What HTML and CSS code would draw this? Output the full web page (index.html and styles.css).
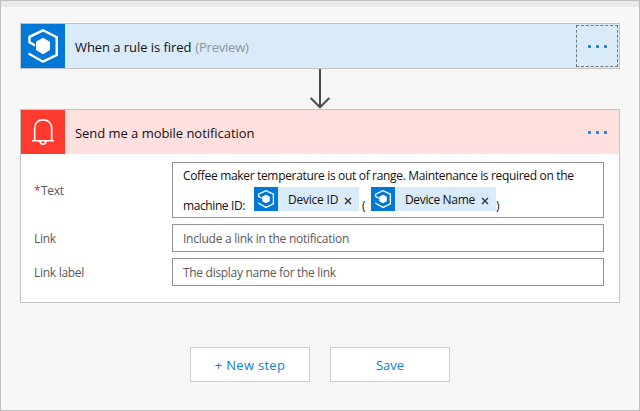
FILE: index.html
```html
<!DOCTYPE html>
<html lang="en">
<head>
<meta charset="utf-8">
<title>Flow designer</title>
<link rel="stylesheet" href="styles.css">
</head>
<body>
<svg width="0" height="0" class="defs">
  <symbol id="hub" viewBox="0 0 44 44">
    <path d="M14 21.500L8.500 18.300V12.800L22 6.300L35.700 13.300V31L22 37.700L7.500 29.500" fill="none" stroke="#fff" stroke-width="2.400"/>
    <path d="M22 13.800L29 17.800V26L22 30.200L15 26V17.800Z" fill="#fff"/>
  </symbol>
  <symbol id="hub-small" viewBox="0 0 24 24">
    <path d="M7.700 11.300L4.600 9.300V7.200L12 3.600L19.400 7.200V16.800L12 20.400L4.200 16" fill="none" stroke="#fff" stroke-width="1.300"/>
    <path d="M12 7.700L15.800 9.800V14.200L12 16.300L8.200 14.200V9.800Z" fill="#fff"/>
  </symbol>
</svg>
<main class="designer">
  <div class="strip"></div>
  <section class="card trigger">
    <header class="head">
      <div class="tile"><svg width="44" height="44"><use href="#hub"/></svg></div>
      <h2 class="title"><span class="t-when">When a rule is fired</span><span class="t-preview">(Preview)</span></h2>
      <button class="more focused" aria-label="More"><i></i><i></i><i></i></button>
    </header>
  </section>
  <svg class="arrow" width="22" height="40" viewBox="0 0 22 40"><path d="M11 0V38M1.700 29L11 38.300L20.300 29" fill="none" stroke="#4a4c4d" stroke-width="2"/></svg>
  <section class="card action">
    <header class="head">
      <div class="tile"><svg width="44" height="44" viewBox="0 0 44 44" fill="none" stroke="#fff" stroke-width="1.600"><path d="M11 30.700H33M13.700 30.500V18.500C13.700 13 17 9.900 22 9.900S30.700 13 30.700 18.500V30.500M19 31C19.300 35.300 24.700 35.300 25 31"/></svg></div>
      <h2 class="title"><span class="t-send">Send me a mobile notification</span></h2>
      <button class="more" aria-label="More"><i></i><i></i><i></i></button>
    </header>
    <div class="form">
      <div class="row tall">
        <label class="label"><b>*</b><span class="t-text">Text</span></label>
        <div class="field multi">
          <div class="line"><span class="t-coffee">Coffee maker temperature is out of range. Maintenance is required on the</span></div>
          <div class="line second">
            <span class="t-machine">machine ID:</span>
            <span class="token id"><svg width="24" height="24"><use href="#hub-small"/></svg><span class="t-id">Device ID</span><svg class="x" width="8" height="8" viewBox="0 0 8 8"><path d="M1 1L7 7M7 1L1 7"/></svg></span>
            <span class="paren open">(</span>
            <span class="token name"><svg width="24" height="24"><use href="#hub-small"/></svg><span class="t-name">Device Name</span><svg class="x" width="8" height="8" viewBox="0 0 8 8"><path d="M1 1L7 7M7 1L1 7"/></svg></span>
            <span class="paren">)</span>
          </div>
        </div>
      </div>
      <div class="row">
        <label class="label"><span class="t-link">Link</span></label>
        <div class="field"><span class="t-include">Include a link in the notification</span></div>
      </div>
      <div class="row">
        <label class="label"><span class="t-label">Link label</span></label>
        <div class="field"><span class="t-display">The display name for the link</span></div>
      </div>
    </div>
  </section>
  <div class="actions">
    <button class="btn"><span class="t-new">+ New step</span></button>
    <button class="btn"><span class="t-save">Save</span></button>
  </div>
</main>
</body>
</html>
```
FILE: styles.css
```css
* { box-sizing: border-box; }
body { margin: 0; font-family: "Open Sans", "Noto Sans", sans-serif; font-size: 12px; color: #111; }
button { font: inherit; padding: 0; border: 0; background: none; }
.defs { display: block; height: 0; }
.designer { width: 640px; height: 411px; border: 1px solid #c0c0c0; background: #f7f7f7; display: flex; flex-direction: column; align-items: center; white-space: nowrap; }
.strip { width: 100%; height: 6px; background: #eaeaea; flex: none; }
.card { width: 600px; border: 1px solid #c3c3c3; background: #fff; flex: none; }
.trigger { margin-top: 16px; }
.head { height: 44px; display: flex; align-items: center; }
.trigger .head { background: #d9eaf8; }
.action .head { background: #ffe0de; }
.tile { width: 44px; height: 44px; background: #0078d7; }
.action .tile { background: #ff3b30; }
.tile svg { display: block; }
.title { flex: 1; margin: 0; padding: 2px 0 0 10px; display: flex; gap: 4px; font-size: 13px; font-weight: 400; line-height: 20px; }
.t-when { letter-spacing: -0.06px; }
.t-preview { color: #8b979f; letter-spacing: -0.22px; }
.t-send { letter-spacing: -0.04px; }
.more { width: 42px; height: 42px; margin-right: 1px; display: flex; align-items: center; justify-content: center; gap: 5px; border: 1px solid transparent; }
.more.focused { border: 1px dashed #6e767c; }
.more i { width: 3px; height: 3px; margin-top: 1px; border-radius: 1px; background: #1880da; }
.arrow { flex: none; display: block; }
.form { padding: 8px 15px 16px 13px; display: flex; flex-direction: column; gap: 6px; }
.row { display: flex; align-items: center; height: 28px; }
.row.tall { height: 56px; }
.label { width: 138px; color: #595959; display: flex; letter-spacing: -0.28px; }
.label b { color: #e0212b; font-weight: 400; width: 7px; }
.field { width: 432px; height: 100%; border: 1px solid #949494; padding-left: 10px; background: #fff; color: #595959; display: flex; align-items: center; }
.field.multi { display: block; color: #111; }
.t-coffee { letter-spacing: -0.33px; }
.t-include { letter-spacing: -0.26px; }
.t-display { letter-spacing: -0.3px; }
.t-id { letter-spacing: -0.22px; }
.t-name { letter-spacing: -0.35px; }
.line { height: 24px; line-height: 25px; }
.line.second { height: 30px; display: flex; align-items: flex-start; }
.t-machine { width: 71px; line-height: 37px; letter-spacing: -0.4px; }
.token { height: 24px; display: flex; align-items: center; background: #d9eaf8; line-height: 24px; }
.token > span { padding-top: 1px; }
.token svg:first-child { background: #0078d7; margin-right: 10px; }
.token.id { width: 105px; }
.token.name { width: 125px; }
.x { margin: 4px 7px 0 auto; stroke: #333; stroke-width: 1.400; fill: none; }
.paren { line-height: 37px; }
.paren.open { width: 12px; padding-left: 3px; }
.actions { margin-top: 44px; display: flex; gap: 20px; }
.btn { width: 120px; height: 35px; border: 1px solid #cfcfcf; background: #fff; color: #0f7bd8; font-size: 13px; }
.t-new { letter-spacing: 0.3px; }
```
